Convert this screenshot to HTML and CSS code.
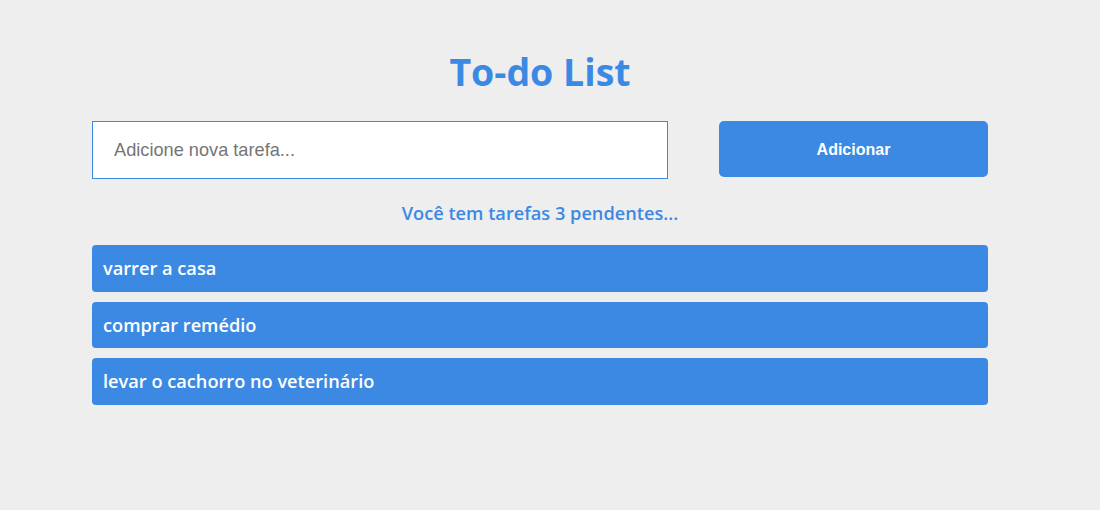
FILE: index.html
```html
<!DOCTYPE html>
<html lang="pt-BR">
<head>
<meta charset="utf-8">
<title>To-do List</title>
<link rel="stylesheet" href="styles.css">
</head>
<body>
<main class="app">
  <h1 class="title">To-do List</h1>
  <form class="add-form">
    <input class="add-input" type="text" placeholder="Adicione nova tarefa...">
    <button class="add-button" type="button">Adicionar</button>
  </form>
  <p class="status">Você tem tarefas 3 pendentes...</p>
  <ul class="tasks">
    <li class="task">varrer a casa</li>
    <li class="task">comprar remédio</li>
    <li class="task">levar o cachorro no veterinário</li>
  </ul>
</main>
</body>
</html>
```
FILE: styles.css
```css
* { box-sizing: border-box; }
html, body { margin: 0; padding: 0; }
body {
  background: #eeeeee;
  font-family: "Open Sans", "Noto Sans", sans-serif;
  height: 510px;
  overflow: hidden;
}
.app {
  width: 896px;
  margin-left: 92px;
  padding-top: 48px;
  display: flex;
  flex-direction: column;
}
.title {
  margin: 0;
  text-align: center;
  color: #3b89e3;
  font-size: 37.5px;
  font-weight: 700;
  line-height: 48px;
}
.add-form {
  margin-top: 25px;
  display: flex;
  justify-content: space-between;
  align-items: flex-start;
}
.add-input {
  width: 576px;
  height: 58px;
  border: 1px solid #3b89e3;
  background: #fff;
  padding: 0 21px;
  font-family: "Liberation Sans", Arial, sans-serif;
  font-size: 18.2px;
  color: #333;
  outline: none;
}
.add-input::placeholder { color: #757575; }
.add-button {
  width: 269px;
  height: 56px;
  padding-top: 2px;
  border: none;
  border-radius: 5px;
  background: #3b89e3;
  color: #fff;
  font-family: "Liberation Sans", Arial, sans-serif;
  font-size: 16px;
  font-weight: 700;
}
.status {
  margin: 22px 0 0;
  text-align: center;
  color: #3b89e3;
  font-size: 18.2px;
  font-weight: 600;
  line-height: 24px;
}
.tasks {
  list-style: none;
  margin: 20px 0 0;
  padding: 0;
  display: flex;
  flex-direction: column;
  gap: 10px;
}
.task {
  height: 46.5px;
  display: flex;
  align-items: center;
  padding: 0 11px;
  border-radius: 4px;
  background: #3b89e3;
  color: #fff;
  font-size: 18.2px;
  font-weight: 600;
}
```
